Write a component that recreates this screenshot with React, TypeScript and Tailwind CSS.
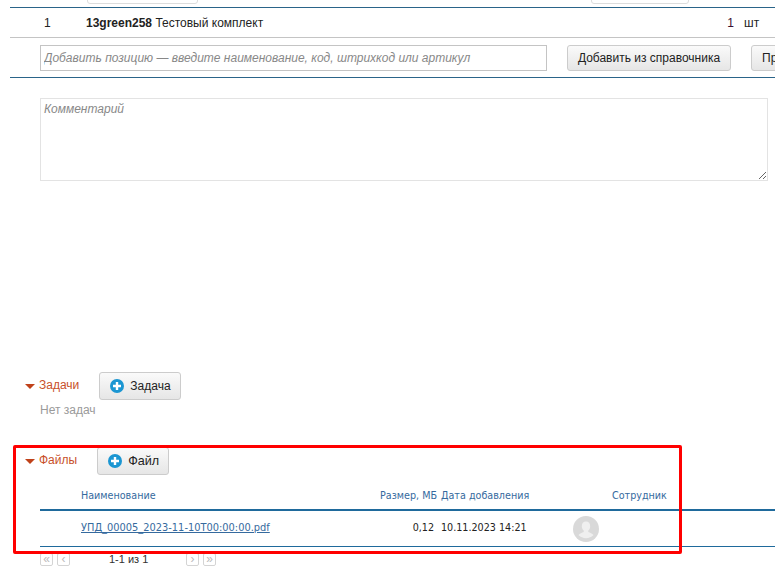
import React from "react";

function PlusIcon() {
  return (
    <svg width="14" height="14" viewBox="0 0 14 14" className="shrink-0">
      <circle cx="7" cy="7" r="7" fill="#1b96d2" />
      <path d="M7 3v8M3 7h8" stroke="#fff" strokeWidth="2.4" />
    </svg>
  );
}

function Avatar() {
  return (
    <svg width="26" height="26" viewBox="0 0 26 26">
      <circle cx="13" cy="13" r="13" fill="#d9d9d9" />
      <path
        d="M13 5.500c-2.600 0-4.200 2-4.200 4.700 0 1.900.8 3.400 1.900 4.400v1.500c-1.800.8-4 1.500-5.200 3a10.500 10.500 0 0 0 15 0c-1.200-1.500-3.400-2.200-5.200-3v-1.500c1.100-1 1.900-2.500 1.900-4.400 0-2.700-1.600-4.700-4.200-4.700z"
        fill="#efefef"
      />
    </svg>
  );
}

function PagerButton({ children }: { children: React.ReactNode }) {
  return (
    <div className="w-[13px] h-[13px] border border-[#d4d4d4] rounded-[2px] flex items-center justify-center pb-[1px] text-[12px] leading-none text-[#bbbbbb]">
      {children}
    </div>
  );
}

function Section({
  title,
  button,
  size,
}: {
  title: string;
  button: string;
  size: string;
}) {
  return (
    <div className="flex items-start gap-[20px] pl-[25px]">
      <div className="flex items-center h-[26px] text-[12px] text-[#c8502a]">
        <span className="w-0 h-0 border-x-[5px] border-x-transparent border-t-[5px] border-t-[#c0421a] mr-[4px] mt-[2px]" />
        {title}
      </div>
      <button
        className={`h-[28px] pl-[10px] pr-[9px] flex items-center gap-[6px] border border-[#cccccc] rounded-[3px] bg-gradient-to-b from-[#fafafa] to-[#e6e6e6] text-[#222222] ${size}`}
      >
        <PlusIcon />
        {button}
      </button>
    </div>
  );
}

export default function App() {
  return (
    <div className="relative w-[775px] h-[566px] overflow-hidden bg-white font-['Liberation_Sans',Arial,sans-serif] text-[12px] text-[#222222]">
      {/* обрезанные кнопки сверху */}
      <div className="h-[7px] relative">
        <div className="absolute top-[-20px] left-[87px] w-[111px] h-[24px] border border-[#dddddd] rounded-[3px]" />
        <div className="absolute top-[-20px] left-[591px] w-[98px] h-[24px] border border-[#dddddd] rounded-[3px]" />
      </div>

      <div className="ml-[10px] border-t border-[#2a6489] h-[30px] flex items-center">
        <span className="ml-[34px] w-[42px]">1</span>
        <span>
          <b className="font-bold">13green258</b> Тестовый комплект
        </span>
        <span className="ml-auto text-[#3a1030]">1</span>
        <span className="ml-[10px] mr-[16px] w-[15px]">шт</span>
      </div>

      <div className="ml-[10px] border-t border-[#c4c4c4] h-[40px] flex items-start pt-[7px] pl-[30px] overflow-hidden">
        <input
          readOnly
          placeholder="Добавить позицию — введите наименование, код, штрихкод или артикул"
          className="w-[507px] h-[26px] shrink-0 border border-[#c4c4c4] px-[3px] text-[12px] italic outline-none placeholder:text-[#888888]"
        />
        <button className="ml-[20px] w-[164px] h-[26px] shrink-0 border border-[#cccccc] rounded-[3px] bg-gradient-to-b from-[#fafafa] to-[#e6e6e6] text-[12px] text-[#222222]">
          Добавить из справочника
        </button>
        <button className="ml-[20px] w-[80px] h-[26px] shrink-0 border border-[#cccccc] rounded-[3px] bg-gradient-to-b from-[#fafafa] to-[#e6e6e6] text-[12px] text-left pl-[10px]">
          Пр
        </button>
      </div>

      <div className="ml-[10px] border-t border-[#2a6489]" />

      <div className="pl-[40px] pt-[20px]">
        <textarea
          readOnly
          placeholder="Комментарий"
          className="block w-[728px] h-[83px] border border-[#e3e3e3] px-[3px] py-[1px] text-[12px] italic outline-none placeholder:text-[#888888]"
        />
      </div>

      <div className="pt-[191px]">
        <Section title="Задачи" button="Задача" size="text-[12px]" />
        <div className="pl-[40px] mt-[3px] h-[14px] text-[12px] leading-[14px] text-[#9a9a9a]">
          Нет задач
        </div>
      </div>

      <div className="pt-[30px]">
        <Section title="Файлы" button="Файл" size="text-[12.6px]" />

        <div className="ml-[40px] mt-[9px] font-['DejaVu_Sans',sans-serif] text-[9.6px]">
          <div className="h-[27px] flex items-center border-b-2 border-[#1f6a9c] text-[#356a9e]">
            <span className="ml-[41px] w-[276px]">Наименование</span>
            <span className="w-[80px] text-right whitespace-nowrap">Размер, МБ</span>
            <span className="ml-[4px] w-[171px] whitespace-nowrap">Дата добавления</span>
            <span className="whitespace-nowrap">Сотрудник</span>
          </div>
          <div className="h-[36px] flex items-center border-b border-[#1f6a9c]">
            <span className="ml-[41px] w-[330px] underline text-[9.85px] text-[#356a9e] whitespace-nowrap">
              УПД_00005_2023-11-10T00:00:00.pdf
            </span>
            <span className="w-[23px] text-right">0,12</span>
            <span className="ml-[7px] w-[132px] whitespace-nowrap">10.11.2023 14:21</span>
            <Avatar />
          </div>
          <div className="flex items-center h-[13px] mt-[6px] gap-[4px] font-['Liberation_Sans',sans-serif]">
            <PagerButton>«</PagerButton>
            <PagerButton>‹</PagerButton>
            <span className="ml-[35px] w-[73px] text-[11px] text-[#333333]">1-1 из 1</span>
            <PagerButton>›</PagerButton>
            <PagerButton>»</PagerButton>
          </div>
        </div>
      </div>

      {/* красная рамка-пометка поверх скриншота */}
      <div className="absolute left-[13px] top-[445px] w-[669px] h-[109px] border-[3px] border-[#ff0000] rounded-[2px] pointer-events-none" />
    </div>
  );
}
